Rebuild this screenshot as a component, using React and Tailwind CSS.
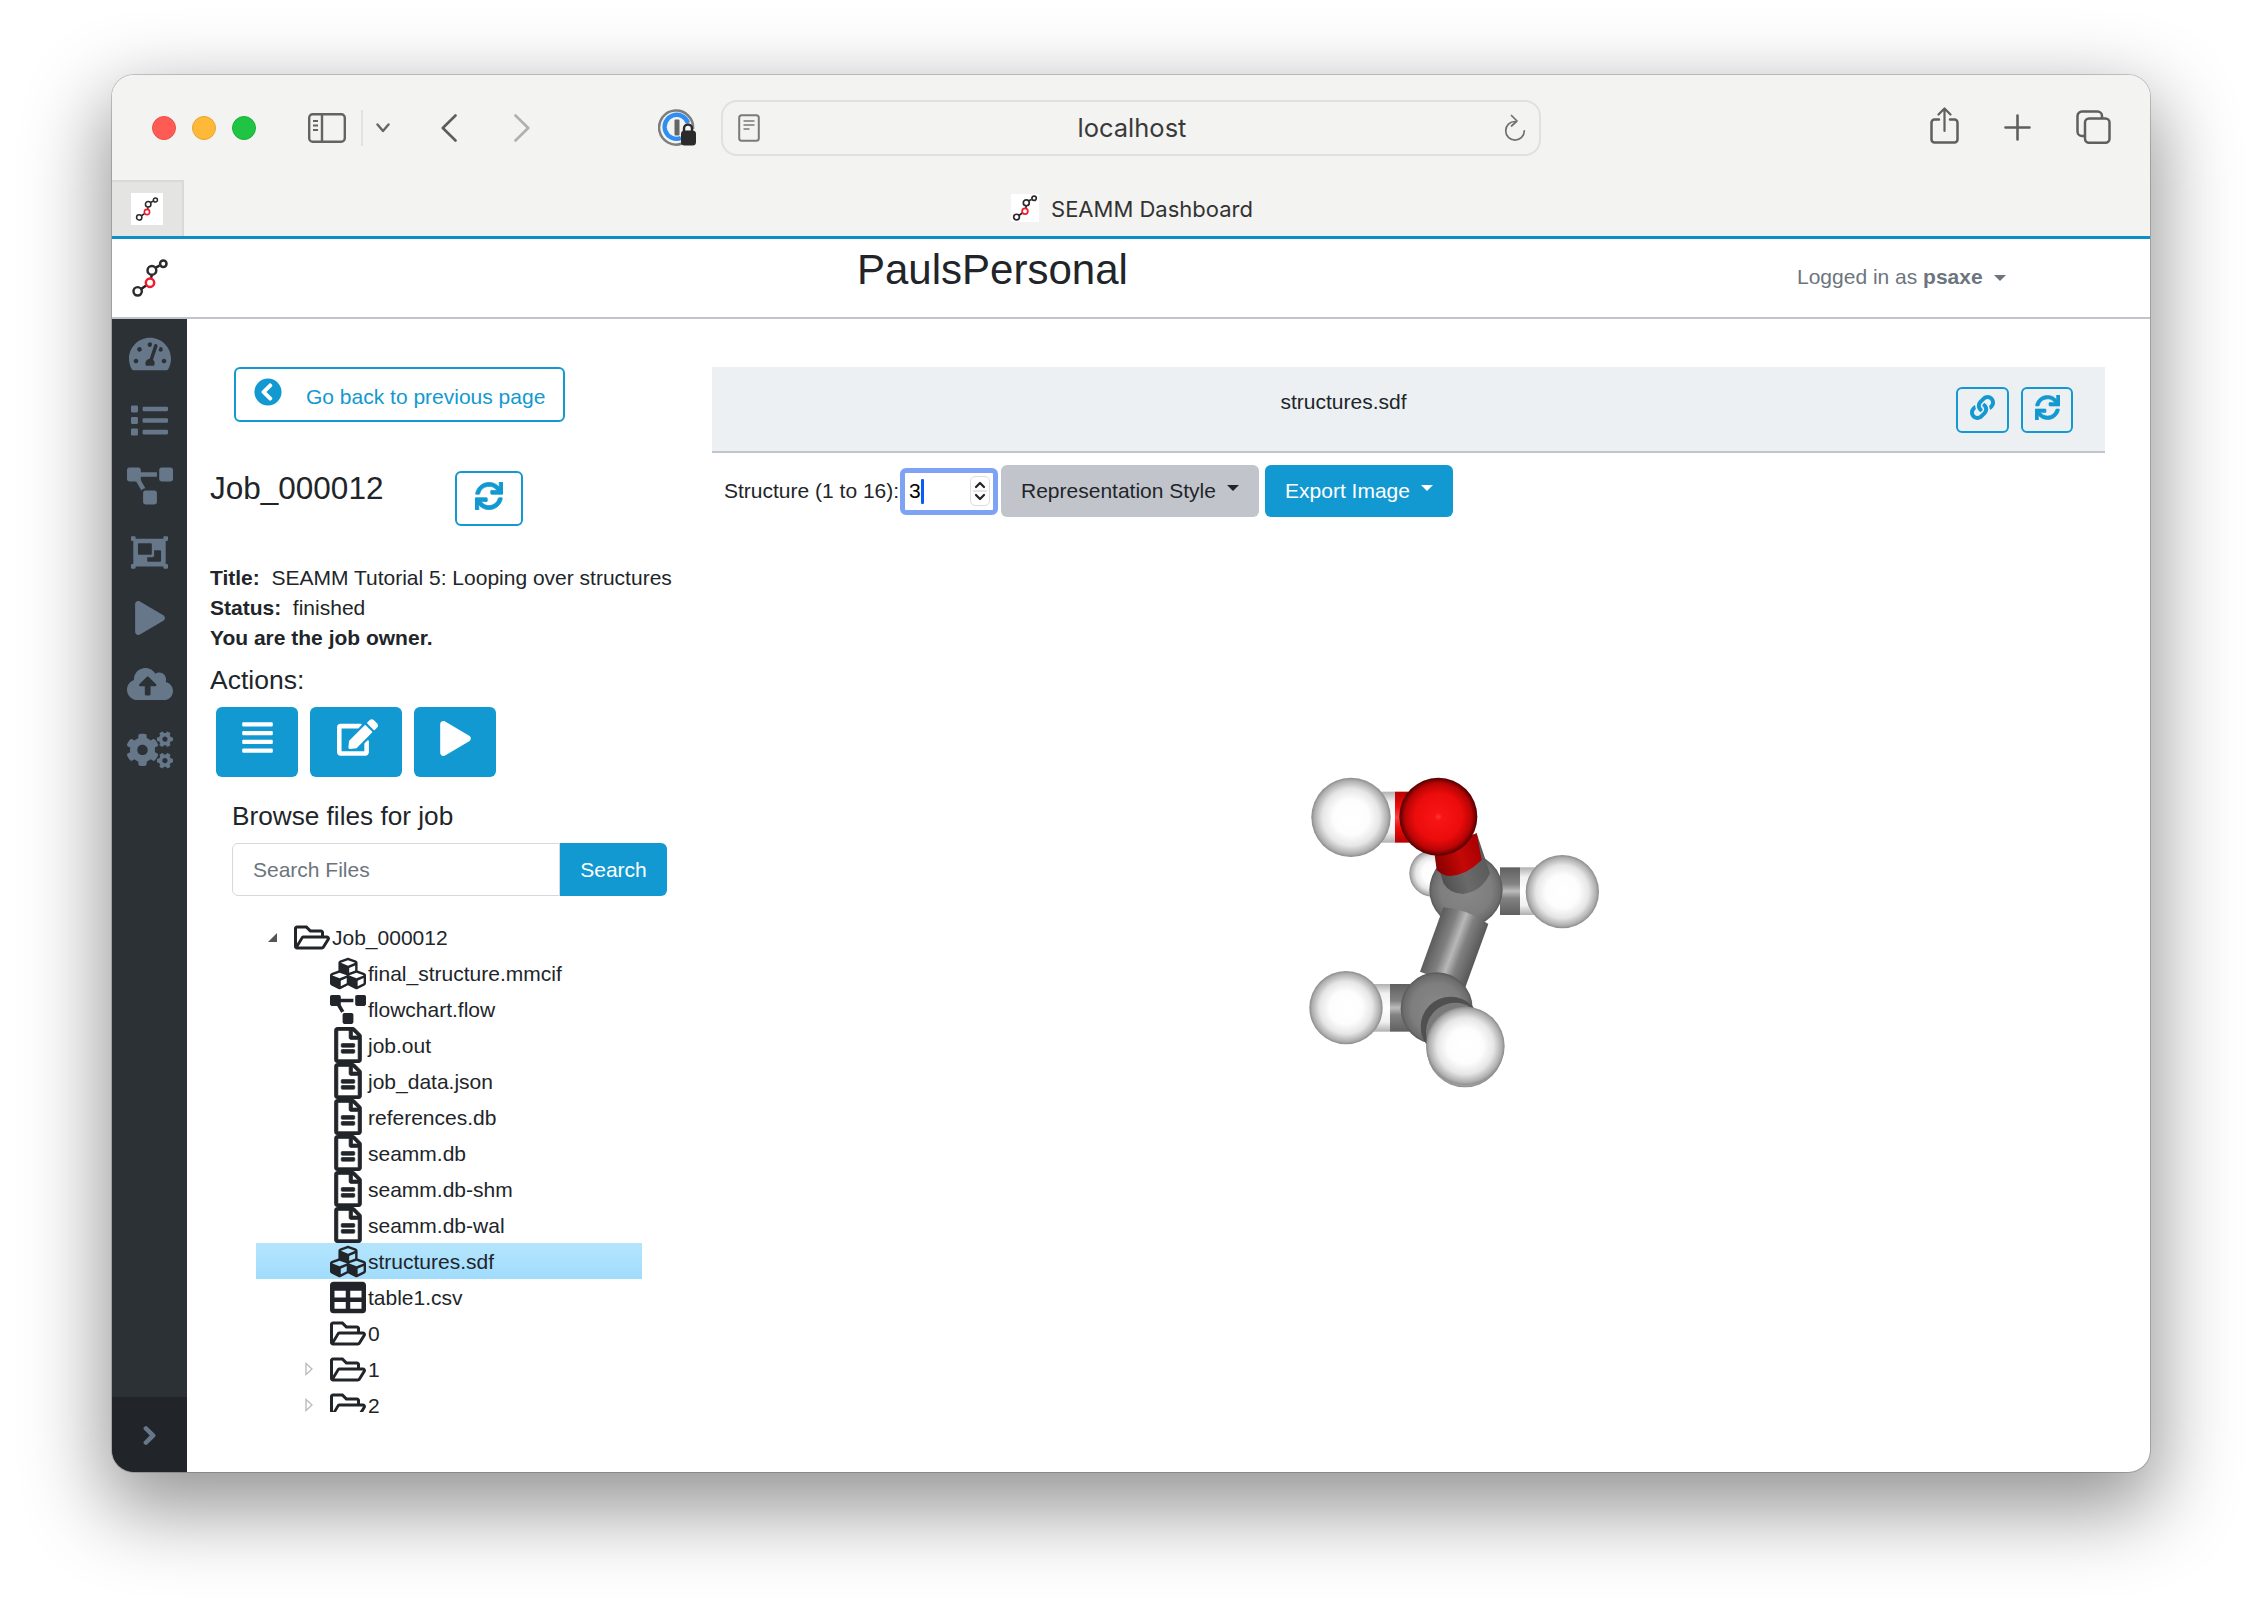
import React from "react";
import {
  FaTachometerAlt, FaList, FaProjectDiagram, FaObjectGroup, FaPlay, FaCloudUploadAlt, FaCogs,
  FaChevronRight, FaChevronCircleLeft, FaSync, FaLink, FaEdit, FaAlignJustify, FaCubes,
  FaRegFileAlt, FaTable, FaRegFolderOpen,
} from "react-icons/fa";

const Logo = ({ className }) => (
  <svg viewBox="0 0 40 40" className={className} fill="none" strokeWidth="2.6">
    <path d="M10 32L17 27M21 20L22 17M26 9L30 7" stroke="#222" />
    <circle cx="7" cy="34" r="4.4" stroke="#2b2b2b" />
    <circle cx="20" cy="25" r="4.4" stroke="#f01c2c" />
    <circle cx="22" cy="12" r="4.6" stroke="#2b2b2b" />
    <circle cx="34" cy="5" r="3.4" stroke="#2b2b2b" />
  </svg>
);

const Caret = ({ color }) => (
  <span className={`ml-[11px] inline-block w-0 h-0 border-x-[6px] border-x-transparent border-t-[6px] -translate-y-[3px] ${color}`} />
);

const Toolbar = () => (
  <div className="h-[105px] shrink-0 flex items-center pl-[40px] bg-[#f3f3f2]">
    <span className="w-[24px] h-[24px] rounded-full bg-[#ff5b55] border border-[#e9504a]" />
    <span className="ml-[16px] w-[24px] h-[24px] rounded-full bg-[#ffb838] border border-[#e6a52f]" />
    <span className="ml-[16px] w-[24px] h-[24px] rounded-full bg-[#1fc443] border border-[#1bb03b]" />
    <svg viewBox="0 0 38 30" className="ml-[52px] w-[38px] h-[30px]" fill="none" stroke="#636363" strokeWidth="2.4">
      <rect x="1.2" y="1.2" width="35.6" height="27.6" rx="3.5" />
      <path d="M14 1v28" />
      <path d="M5 8h5M5 12.5h5M5 17h5" strokeWidth="1.8" />
    </svg>
    <span className="ml-[15px] w-[2px] h-[36px] bg-[#e2e2e1]" />
    <svg viewBox="0 0 14 10" className="ml-[13px] w-[14px] h-[10px]" fill="none" stroke="#666" strokeWidth="2.4" strokeLinecap="round" strokeLinejoin="round">
      <path d="M1.5 1.5L7 8l5.5-6.5" />
    </svg>
    <svg viewBox="0 0 16 28" className="ml-[51px] w-[16px] h-[28px]" fill="none" stroke="#5d5d5d" strokeWidth="2.6" strokeLinecap="round" strokeLinejoin="round">
      <path d="M14.5 1.5L1.8 14l12.7 12.5" />
    </svg>
    <svg viewBox="0 0 16 28" className="ml-[57px] w-[16px] h-[28px]" fill="none" stroke="#b0b0b0" strokeWidth="2.6" strokeLinecap="round" strokeLinejoin="round">
      <path d="M1.5 1.5L14.2 14 1.5 26.5" />
    </svg>
    <svg viewBox="0 0 39 37" className="ml-[128px] w-[39px] h-[37px]">
      <path d="M24 34.5A17 17 0 1 1 35 20" fill="none" stroke="#7d7d7d" strokeWidth="2.5" />
      <path d="M23 29A12 12 0 1 1 30 14" fill="none" stroke="#2f8ff0" strokeWidth="4.4" />
      <rect x="16.5" y="10.5" width="5" height="16" rx="1" fill="#666" />
      <path d="M26 22v-2.5a4 4 0 0 1 8 0V22" fill="none" stroke="#2b2b2b" strokeWidth="2.4" />
      <rect x="23" y="21.5" width="15" height="15" rx="3.5" fill="#2b2b2b" />
    </svg>
    <div className="ml-[24px] w-[820px] h-[56px] rounded-[16px] border-[2.5px] border-[#e0e0de] flex items-center pl-[16px] pr-[12px]">
      <svg viewBox="0 0 22 28" className="w-[22px] h-[28px] -translate-x-[1px]" fill="none" stroke="#7a7a7a" strokeWidth="2">
        <rect x="1.2" y="1.2" width="19.6" height="25.6" rx="2.5" />
        <path d="M5.5 7h11M5.5 11h11M5.5 15h6" strokeWidth="1.6" />
      </svg>
      <span className="flex-1 text-center text-[25.5px] text-[#3a3a3a] font-['Inter',sans-serif] translate-y-[1px]">localhost</span>
      <svg viewBox="0 0 24 28" className="w-[24px] h-[28px]" fill="none" stroke="#707070" strokeWidth="1.7" strokeLinecap="round" strokeLinejoin="round">
        <path d="M12 7.5A9.3 9.3 0 1 0 21.3 16.8" />
        <path d="M8.5 1.5L14 7l-5.5 5" />
      </svg>
    </div>
    <svg viewBox="0 0 29 37" className="ml-[389px] w-[29px] h-[37px] -translate-y-[2px]" fill="none" stroke="#5f5f5f" strokeWidth="2.5" strokeLinecap="round" strokeLinejoin="round">
      <path d="M9 12.5H4.5a3 3 0 0 0-3 3v17a3 3 0 0 0 3 3h20a3 3 0 0 0 3-3v-17a3 3 0 0 0-3-3H20" />
      <path d="M14.5 24V2M8.5 7.5l6-6 6 6" strokeWidth="2.2" />
    </svg>
    <svg viewBox="0 0 27 27" className="ml-[45px] w-[27px] h-[27px]" fill="none" stroke="#5f5f5f" strokeWidth="2.6" strokeLinecap="round">
      <path d="M13.5 1.5v24M1.5 13.5h24" />
    </svg>
    <svg viewBox="0 0 35 34" className="ml-[45px] w-[35px] h-[34px] -translate-y-[1px]" fill="none" stroke="#5f5f5f" strokeWidth="2.5">
      <rect x="9" y="8.5" width="24.5" height="24.3" rx="4" />
      <path d="M8.8 26H6a4.5 4.5 0 0 1-4.5-4.5V6A4.5 4.5 0 0 1 6 1.5h15.5A4.5 4.5 0 0 1 26 6v2.3" />
    </svg>
  </div>
);

const TabBar = () => (
  <div className="h-[56px] shrink-0 flex bg-[#f3f3f2]">
    <div className="w-[72px] bg-[#e4e4e3] border-r-2 border-t-2 border-[#d9d9d8] flex items-center justify-center">
      <div className="w-[32px] h-[32px] bg-white flex items-center justify-center">
        <Logo className="w-[24px] h-[26px]" />
      </div>
    </div>
    <div className="flex-1 flex items-center justify-center pr-[70px]">
      <div className="w-[28px] h-[28px] bg-white flex items-center justify-center">
        <Logo className="w-[26px] h-[26px]" />
      </div>
      <span className="ml-[12px] text-[22px] text-[#333] font-['Inter',sans-serif] translate-y-[1px]">SEAMM Dashboard</span>
    </div>
  </div>
);

const Header = () => (
  <div className="h-[78px] shrink-0 flex bg-white border-t-[3px] border-t-[#0b8fc9] box-content border-b-2 border-b-[#c1c5cb] items-center">
    <div className="w-[75px] flex justify-center">
      <Logo className="w-[38px] h-[38px]" />
    </div>
    <div className="ml-[670px] w-[270px] text-center text-[42px] leading-none text-[#212529] whitespace-nowrap -translate-y-[8px]">PaulsPersonal</div>
    <div className="ml-[670px] text-[21px] text-[#6c757d] whitespace-nowrap -translate-y-[1px]">
      Logged in as <b>psaxe</b>
      <Caret color="border-t-[#6c757d]" />
    </div>
  </div>
);

const sideIcons = [
  [FaTachometerAlt, 42],
  [FaList, 37],
  [FaProjectDiagram, 46],
  [FaObjectGroup, 37],
  [FaPlay, 34],
  [FaCloudUploadAlt, 46],
  [FaCogs, 46],
];

const Sidebar = () => (
  <div className="w-[75px] shrink-0 bg-[#2c3136] flex flex-col">
    <div className="flex-1 flex flex-col items-center pt-[2px]">
      {sideIcons.map(([Icon, s], i) => (
        <div key={i} className="h-[66px] flex items-center justify-center">
          <Icon size={s} color="#67778a" />
        </div>
      ))}
    </div>
    <div className="h-[75px] bg-[#212529] flex items-center justify-center">
      <FaChevronRight size={21} color="#67778a" stroke="#67778a" strokeWidth={30} className="translate-y-[1px]" />
    </div>
  </div>
);

const files = [
  ["final_structure.mmcif", "cube"],
  ["flowchart.flow", "flow"],
  ["job.out", "file"],
  ["job_data.json", "file"],
  ["references.db", "file"],
  ["seamm.db", "file"],
  ["seamm.db-shm", "file"],
  ["seamm.db-wal", "file"],
  ["structures.sdf", "cube", true],
  ["table1.csv", "table"],
  ["0", "folder"],
  ["1", "folder", false, true],
  ["2", "folder", false, true, true],
];

const TreeIcon = ({ type }) => {
  const c = "#212529";
  if (type === "cube") return <FaCubes size={37} color={c} />;
  if (type === "flow") return <FaProjectDiagram size={37} color={c} />;
  if (type === "file") return <FaRegFileAlt size={36} color={c} stroke={c} strokeWidth={10} />;
  if (type === "table") return <FaTable size={37} color={c} />;
  return <FaRegFolderOpen size={37} color={c} />;
};

const Row = ({ name, type, selected, closed, clip }) => (
  <div className={`h-[36px] flex items-center text-[21px] text-[#212529] ${selected ? "bg-gradient-to-b from-[#b5e5fd] to-[#a0dcfc]" : ""}`}>
    <div className="w-[57px] shrink-0 flex justify-end">
      {closed && (
        <svg viewBox="0 0 8 14" className="w-[8px] h-[14px]">
          <path d="M1 1.5L7 7l-6 5.5z" fill="#fff" stroke="#bdbdbd" strokeWidth="1.4" />
        </svg>
      )}
    </div>
    <div className={`ml-[17px] w-[36px] shrink-0 flex justify-center overflow-hidden ${clip ? "h-[25px] self-start" : "h-[36px] items-center"}`}>
      <TreeIcon type={type} />
    </div>
    <span className="ml-[2px] whitespace-nowrap translate-y-[1px]">{name}</span>
  </div>
);

const Left = () => (
  <div className="w-[525px] shrink-0 flex flex-col text-[#212529]">
    <div className="mt-[48px] ml-[47px] w-[331px] h-[55px] border-[2.5px] border-[#1299d1] rounded-[6px] flex items-center pl-[18px] text-[#1299d1] text-[21px]">
      <FaChevronCircleLeft size={28} className="-translate-y-[3px]" />
      <span className="ml-[24px] whitespace-nowrap translate-y-[2px]">Go back to previous page</span>
    </div>
    <div className="mt-[49px] ml-[23px] flex items-start">
      <span className="text-[31.5px] leading-[34px]">Job_000012</span>
      <div className="ml-[72px] w-[68px] h-[55px] border-2 border-[#1299d1] rounded-[6px] flex items-center justify-center">
        <FaSync size={28} color="#1299d1" stroke="#1299d1" strokeWidth={14} className="-translate-y-[3px]" />
      </div>
    </div>
    <div className="mt-[37px] ml-[23px] text-[21px] leading-[30px] whitespace-nowrap">
      <div><b>Title:</b>&nbsp; SEAMM Tutorial 5: Looping over structures</div>
      <div><b>Status:</b>&nbsp; finished</div>
      <div><b>You are the job owner.</b></div>
    </div>
    <div className="mt-[7px] ml-[23px] h-[40px] text-[26.5px] leading-[40px]">Actions:</div>
    <div className="mt-[7px] ml-[29px] flex gap-[12px]">
      <div className="w-[82px] h-[70px] bg-[#1299d1] rounded-[6px] flex items-center justify-center">
        <FaAlignJustify size={35} color="white" className="-translate-y-[5px]" />
      </div>
      <div className="w-[92px] h-[70px] bg-[#1299d1] rounded-[6px] flex items-center justify-center">
        <FaEdit size={41} color="white" className="-translate-y-[5px] translate-x-[1px]" />
      </div>
      <div className="w-[82px] h-[70px] bg-[#1299d1] rounded-[6px] flex items-center justify-center">
        <FaPlay size={35} color="white" className="-translate-y-[4px]" />
      </div>
    </div>
    <div className="mt-[21px] ml-[45px] h-[36px] text-[26.2px] leading-[36px]">Browse files for job</div>
    <div className="mt-[9px] ml-[45px] flex h-[53px] text-[21px]">
      <div className="w-[328px] border border-[#d5d9dd] rounded-l-[6px] flex items-center pl-[20px] text-[#6c757d]">Search Files</div>
      <div className="w-[107px] bg-[#1299d1] rounded-r-[6px] flex items-center justify-center text-white">Search</div>
    </div>
    <div className="mt-[23px] ml-[69px] w-[386px]">
      <div className="h-[36px] flex items-center text-[21px]">
        <span className="ml-[12px] w-0 h-0 border-l-[9px] border-l-transparent border-b-[9px] border-b-[#555]" />
        <div className="ml-[17px] w-[36px] shrink-0 flex justify-center">
          <FaRegFolderOpen size={37} color="#212529" />
        </div>
        <span className="ml-[2px] translate-y-[1px]">Job_000012</span>
      </div>
      {files.map(([n, t, s, c, k]) => (
        <Row key={n} name={n} type={t} selected={s} closed={c} clip={k} />
      ))}
    </div>
  </div>
);

const Sphere = ({ cx, cy, r, fill }) => <circle cx={cx} cy={cy} r={r} fill={`url(#${fill})`} />;

const Molecule = () => (
  <svg viewBox="0 0 1020 1020" className="w-[340px] h-[340px]">
    <defs>
      <radialGradient id="w" cx="50%" cy="50%" r="50%">
        <stop offset="0" stopColor="#fff" />
        <stop offset="0.45" stopColor="#fdfdfd" />
        <stop offset="0.72" stopColor="#e6e6e6" />
        <stop offset="0.92" stopColor="#b0b0b0" />
        <stop offset="1" stopColor="#8a8a8a" />
      </radialGradient>
      <radialGradient id="r" cx="50%" cy="50%" r="50%">
        <stop offset="0" stopColor="#ff3838" />
        <stop offset="0.1" stopColor="#f81414" />
        <stop offset="0.6" stopColor="#ec0c0c" />
        <stop offset="0.86" stopColor="#b80404" />
        <stop offset="1" stopColor="#500000" />
      </radialGradient>
      <radialGradient id="g" cx="50%" cy="50%" r="50%">
        <stop offset="0" stopColor="#888" />
        <stop offset="0.7" stopColor="#7e7e7e" />
        <stop offset="0.92" stopColor="#6c6c6c" />
        <stop offset="1" stopColor="#585858" />
      </radialGradient>
      <linearGradient id="cw" x1="0" y1="0" x2="0" y2="1">
        <stop offset="0" stopColor="#b0b0b0" />
        <stop offset="0.2" stopColor="#f0f0f0" />
        <stop offset="0.5" stopColor="#ffffff" />
        <stop offset="0.8" stopColor="#f0f0f0" />
        <stop offset="1" stopColor="#b0b0b0" />
      </linearGradient>
      <linearGradient id="cg" x1="0" y1="0" x2="0" y2="1">
        <stop offset="0" stopColor="#606060" />
        <stop offset="0.35" stopColor="#828282" />
        <stop offset="0.5" stopColor="#bcbcbc" />
        <stop offset="0.65" stopColor="#828282" />
        <stop offset="1" stopColor="#606060" />
      </linearGradient>
      <linearGradient id="cr" x1="0" y1="0" x2="0" y2="1">
        <stop offset="0" stopColor="#b80000" />
        <stop offset="0.3" stopColor="#ee0c0c" />
        <stop offset="0.5" stopColor="#ff4040" />
        <stop offset="0.7" stopColor="#ee0c0c" />
        <stop offset="1" stopColor="#b80000" />
      </linearGradient>
      <linearGradient id="cc" x1="490" y1="472" x2="625" y2="522" gradientUnits="userSpaceOnUse">
        <stop offset="0" stopColor="#5c5c5c" />
        <stop offset="0.3" stopColor="#808080" />
        <stop offset="0.5" stopColor="#b8b8b8" />
        <stop offset="0.68" stopColor="#808080" />
        <stop offset="1" stopColor="#585858" />
      </linearGradient>
      <linearGradient id="ogr" x1="470" y1="330" x2="600" y2="280" gradientUnits="userSpaceOnUse">
        <stop offset="0" stopColor="#8f0000" />
        <stop offset="0.5" stopColor="#c40808" />
        <stop offset="1" stopColor="#a80000" />
      </linearGradient>
      <linearGradient id="ogg" x1="480" y1="400" x2="630" y2="350" gradientUnits="userSpaceOnUse">
        <stop offset="0" stopColor="#4c4c4c" />
        <stop offset="0.5" stopColor="#6a6a6a" />
        <stop offset="1" stopColor="#5a5a5a" />
      </linearGradient>
    </defs>
    <Sphere cx={458} cy={370} r={70} fill="w" />
    <rect x="660" y="352" width="60" height="143" fill="url(#cg)" />
    <rect x="720" y="352" width="60" height="143" fill="url(#cw)" />
    <Sphere cx={558} cy={420} r={110} fill="g" />
    <path d="M490 472Q565 478 625 522L555 715L420 665Z" fill="url(#cc)" />
    <path d="M462 300L590 250L630 370Q605 425 550 432Q510 432 490 400Z" fill="url(#ogg)" />
    <path d="M462 300L590 250L605 330Q560 375 510 378Q490 378 470 360Z" fill="url(#ogr)" />
    <rect x="295" y="125" width="50" height="153" fill="url(#cw)" />
    <rect x="345" y="125" width="50" height="153" fill="url(#cr)" />
    <Sphere cx={213} cy={202} r={119} fill="w" />
    <Sphere cx={475} cy={200} r={117} fill="r" />
    <Sphere cx={847} cy={425} r={110} fill="w" />
    <rect x="275" y="702" width="55" height="143" fill="url(#cw)" />
    <rect x="330" y="702" width="60" height="143" fill="url(#cg)" />
    <Sphere cx={198} cy={773} r={110} fill="w" />
    <Sphere cx={470} cy={775} r={108} fill="g" />
    <circle cx="512" cy="830" r="90" fill="#505050" />
    <circle cx="526" cy="846" r="88" fill="#7a7a7a" />
    <Sphere cx={555} cy={897} r={115} fill="w" />
    <Sphere cx={556} cy={888} r={118} fill="w" />
  </svg>
);

const Right = () => (
  <div className="w-[1393px] shrink-0 flex flex-col pt-[48px] text-[#212529]">
    <div className="h-[86px] bg-[#ecf0f3] border-b-2 border-b-[#c1c5cb] flex items-start relative">
      <div className="flex-1 text-center text-[21px] leading-[30px] mt-[20px] pr-[130px]">structures.sdf</div>
      <div className="absolute right-[32px] top-[20px] flex gap-[12px]">
        <div className="w-[53px] h-[46px] border-2 border-[#1299d1] rounded-[6px] flex items-center justify-center">
          <FaLink size={25} color="#1299d1" className="-translate-y-[3px]" />
        </div>
        <div className="w-[52px] h-[46px] border-2 border-[#1299d1] rounded-[6px] flex items-center justify-center">
          <FaSync size={25} color="#1299d1" stroke="#1299d1" strokeWidth={14} className="-translate-y-[3px]" />
        </div>
      </div>
    </div>
    <div className="mt-[12px] flex h-[52px] text-[21px] items-center">
      <span className="ml-[12px] w-[173px] whitespace-nowrap">Structure (1 to 16):</span>
      <div className="ml-[3px] w-[98px] h-[47px] rounded-[6px] border-[5px] border-[#7ea3f5] bg-white flex items-center pl-[4px] pr-[3px] text-black">
        <span>3</span>
        <span className="w-[3px] h-[25px] bg-[#0a5cf5] rounded-[1px]" />
        <div className="ml-auto w-[20px] h-[30px] rounded-[5px] border border-[#ddd] flex flex-col items-center justify-center bg-white">
          <svg viewBox="0 0 14 26" className="w-[14px] h-[26px]" fill="none" stroke="#222" strokeWidth="2.2" strokeLinecap="round" strokeLinejoin="round">
            <path d="M3 9l4-4 4 4M3 17l4 4 4-4" />
            <path d="M-2 13h18" stroke="#ddd" strokeWidth="1.5" />
          </svg>
        </div>
      </div>
      <div className="ml-[3px] w-[258px] h-[52px] rounded-[6px] bg-[#c1c5cb] flex items-center justify-center whitespace-nowrap">
        Representation Style<Caret color="border-t-[#212529]" />
      </div>
      <div className="ml-[6px] w-[188px] h-[52px] rounded-[6px] bg-[#1299d1] text-white flex items-center justify-center whitespace-nowrap">
        Export Image<Caret color="border-t-white" />
      </div>
    </div>
    <div className="mt-[233px] ml-[568px]">
      <Molecule />
    </div>
  </div>
);

export default function App() {
  return (
    <div className="w-[2262px] h-[1620px] pt-[75px] pl-[112px] bg-white overflow-hidden font-['Liberation_Sans',Arial,sans-serif]">
      <div className="w-[2038px] h-[1397px] rounded-[22px] overflow-hidden bg-white flex flex-col shadow-[0_0_0_1px_rgba(0,0,0,0.18),0_30px_80px_8px_rgba(0,0,0,0.42)]">
        <Toolbar />
        <TabBar />
        <Header />
        <div className="flex-1 flex min-h-0">
          <Sidebar />
          <Left />
          <Right />
        </div>
      </div>
    </div>
  );
}
